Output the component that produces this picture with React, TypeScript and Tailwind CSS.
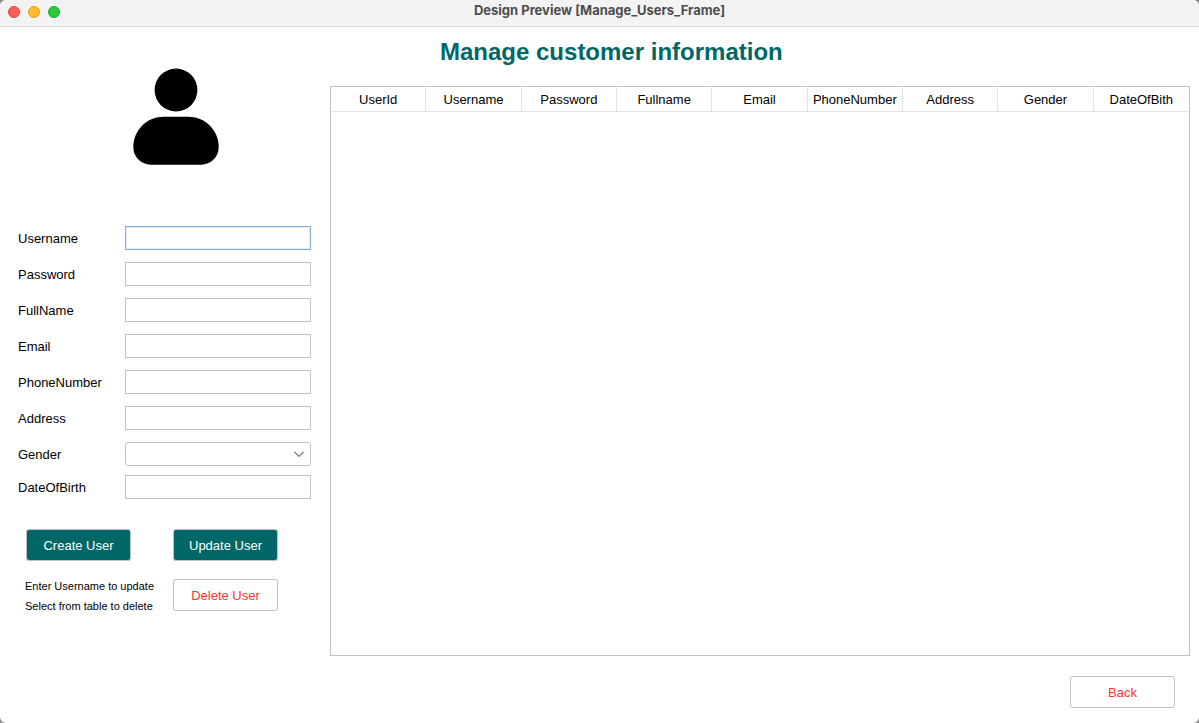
import React from "react";

type Field = { id: string; label: string; type: string; active?: boolean };

const fields: Field[] = [
  { id: "username", label: "Username", type: "text", active: true },
  { id: "password", label: "Password", type: "text" },
  { id: "fullname", label: "FullName", type: "text" },
  { id: "email", label: "Email", type: "email" },
  { id: "phone", label: "PhoneNumber", type: "tel" },
  { id: "address", label: "Address", type: "text" },
];

const columns = [
  "UserId",
  "Username",
  "Password",
  "Fullname",
  "Email",
  "PhoneNumber",
  "Address",
  "Gender",
  "DateOfBith",
];

const inputBase = "h-6 w-full border bg-white px-1.5 outline-none";
const inputIdle = "border-[#c2c2c2]";
const inputActive = "border-[#89b0d8] inset-ring inset-ring-[#deebf8]";
const buttonBase = "h-8 w-[105px] rounded-[3px] border border-[#c2c2c2] pt-0.5";
const primaryButton = "bg-[#006766] text-white";
const dangerButton = "bg-white text-[#ff3333]";

function TitleBar() {
  return (
    <header className="grid h-[27px] grid-cols-[1fr_auto_1fr] border-b border-[#d8d8d8] bg-[#f3f3f3]">
      <div className="flex gap-2 pt-1.5 pl-2">
        <button type="button" aria-label="Close" className="size-3 rounded-full border border-[#e2463f] bg-[#ff5f57]" />
        <button type="button" aria-label="Minimize" className="size-3 rounded-full border border-[#e1a116] bg-[#febc2e]" />
        <button type="button" aria-label="Zoom" className="size-3 rounded-full border border-[#12ac28] bg-[#28c840]" />
      </div>
      <div className="font-['Inter',sans-serif] text-[13px] leading-5 font-bold text-[#4d4d4d]">
        Design Preview [Manage_Users_Frame]
      </div>
    </header>
  );
}

function UserIcon() {
  return (
    <svg viewBox="0 0 86 98" className="mx-auto h-[98px] w-[86px]" aria-hidden="true">
      <circle cx="43" cy="22" r="21.4" />
      <path d="M31 48.7H55C72 48.7 85.7 62 85.7 79C85.7 89 78 96.7 68 96.7H18C8 96.7 0.3 89 0.3 79C0.3 62 14 48.7 31 48.7Z" />
    </svg>
  );
}

function UserForm() {
  return (
    <form className="flex w-[330px] shrink-0 flex-col pt-[41px]" onSubmit={(e) => e.preventDefault()}>
      <div className="pl-[22px]">
        <UserIcon />
      </div>
      <div className="mt-[60px] flex flex-col gap-3 pr-[19px] pl-[18px]">
        {fields.map((field) => (
          <div key={field.id} className="grid grid-cols-[107px_1fr] items-center">
            <label htmlFor={field.id} className="pt-0.5">{field.label}</label>
            <input
              id={field.id}
              type={field.type}
              className={`${inputBase} ${field.active ? inputActive : inputIdle}`}
            />
          </div>
        ))}
        <div className="flex flex-col gap-[9px]">
          <div className="grid grid-cols-[107px_1fr] items-center">
            <label htmlFor="gender" className="pt-0.5">Gender</label>
            <div className="relative">
              <select
                id="gender"
                defaultValue=""
                className="block h-6 w-full appearance-none rounded-[3px] border border-[#c2c2c2] bg-white px-1.5 outline-none"
              >
                <option value="" />
                <option value="male">Male</option>
                <option value="female">Female</option>
              </select>
              <svg
                viewBox="0 0 10 6"
                className="pointer-events-none absolute top-[9px] right-[7px] h-1.5 w-2.5"
                fill="none"
                stroke="#666666"
                strokeWidth="1.1"
                aria-hidden="true"
              >
                <path d="M0.4 0.8L5 5.3L9.6 0.8" />
              </svg>
            </div>
          </div>
          <div className="grid grid-cols-[107px_1fr] items-center">
            <label htmlFor="birth" className="pt-0.5">DateOfBirth</label>
            <input id="birth" type="text" className={`${inputBase} ${inputIdle}`} />
          </div>
        </div>
      </div>
      <div className="mt-[30px] grid grid-cols-[148px_auto] justify-start gap-y-[18px] pl-[25px]">
        <div className="pl-px">
          <button type="button" className={`${buttonBase} ${primaryButton}`}>Create User</button>
        </div>
        <button type="button" className={`${buttonBase} ${primaryButton}`}>Update User</button>
        <div className="-mt-[3px] text-[11px] leading-5">
          <p>Enter Username to update</p>
          <p>Select from table to delete</p>
        </div>
        <button type="button" className={`${buttonBase} ${dangerButton}`}>Delete User</button>
      </div>
    </form>
  );
}

export default function App() {
  return (
    <div className="bg-[#8a8a8a]">
      <div className="flex min-h-screen flex-col overflow-hidden rounded-md bg-white font-['Liberation_Sans',Arial,sans-serif] text-[13px] leading-5 text-black">
        <TitleBar />
        <main className="flex flex-1">
          <UserForm />
          <section className="flex min-w-0 flex-1 flex-col pr-[9px] pb-[15px]">
            <h1 className="pt-[9px] pb-[18px] pl-[110px] text-2xl leading-8 font-bold text-[#006766]">
              Manage customer information
            </h1>
            <div className="flex-1 border border-[#c2c2c2]">
              <table className="w-full table-fixed border-separate border-spacing-0">
                <thead>
                  <tr>
                    {columns.map((name) => (
                      <th
                        key={name}
                        scope="col"
                        className="h-[25px] border-r border-b border-[#e4e4e4] p-0 pt-0.5 text-center font-normal last:border-r-0"
                      >
                        {name}
                      </th>
                    ))}
                  </tr>
                </thead>
                <tbody />
              </table>
            </div>
            <div className="mt-5 flex justify-end pr-[15px]">
              <button type="button" className={`${buttonBase} ${dangerButton}`}>Back</button>
            </div>
          </section>
        </main>
      </div>
    </div>
  );
}
